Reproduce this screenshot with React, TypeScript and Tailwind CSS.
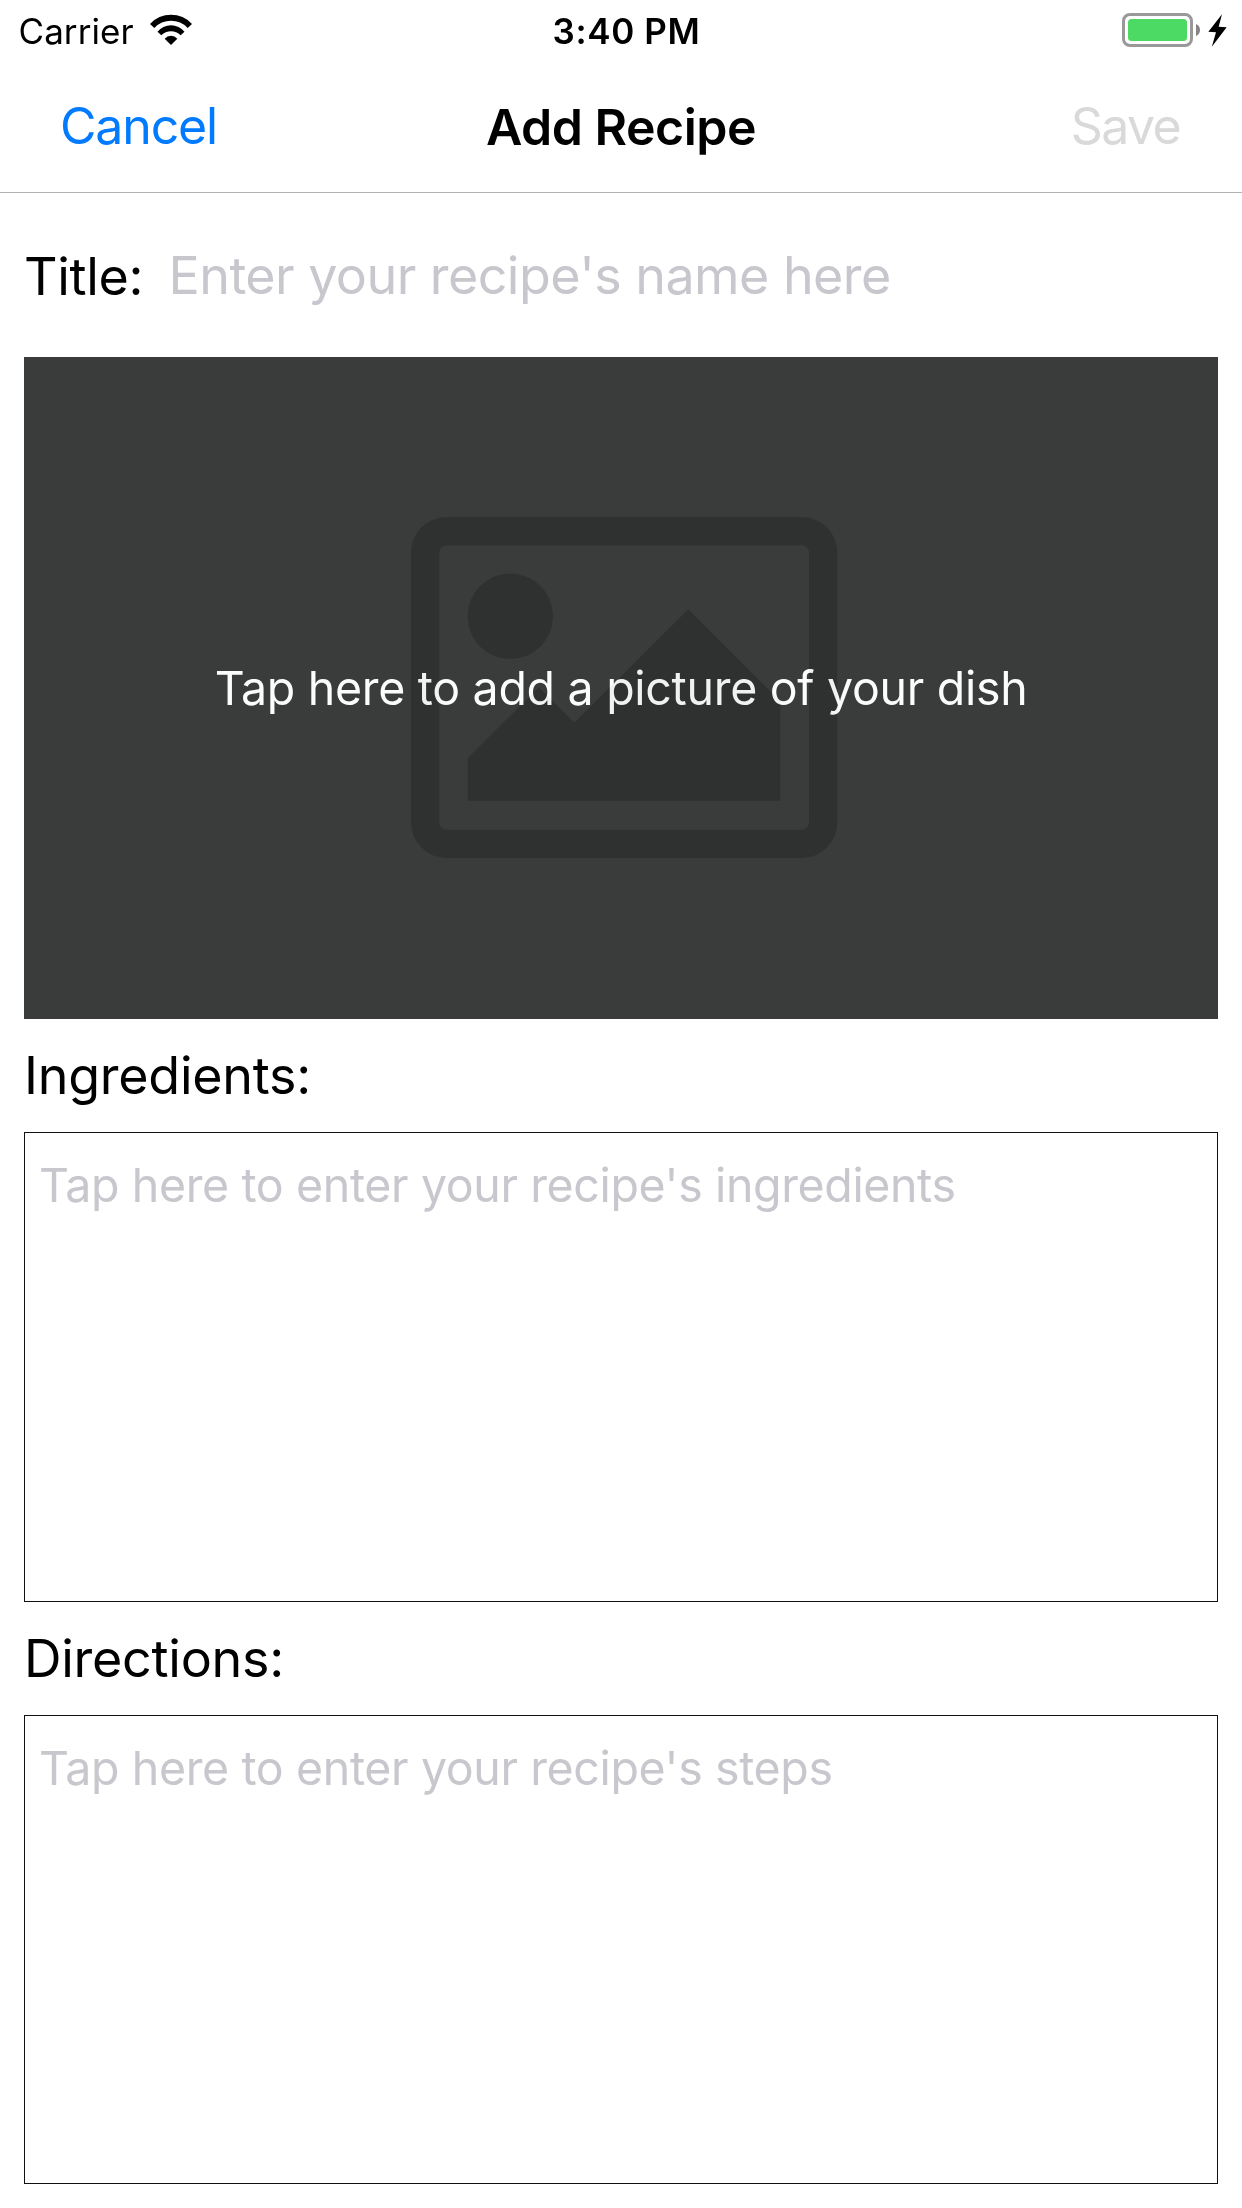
import React from "react";

function WifiIcon() {
  return (
    <svg className="block h-[32px] w-[42px]" viewBox="450 42 126 96" fill="black">
      <path d="M450 72A85 85 0 0 1 576 72L563 84A68 68 0 0 0 463 84Z" />
      <path d="M472.500 95A52 52 0 0 1 553.500 95L542 106A41 41 0 0 0 484 106Z" />
      <path d="M494 116A25 25 0 0 1 532 116L513 135Z" />
    </svg>
  );
}

function Battery() {
  return (
    <div className="flex items-center">
      <div className="h-[34px] w-[71px] rounded-[8px] border-3 border-[#999999] p-[3px]">
        <div className="h-full w-full rounded-[3.5px] bg-[#4cd964]" />
      </div>
      <svg className="ml-[3px] block h-[14px] w-[4px]" viewBox="0 0 4 14" fill="#858585">
        <path d="M0 1C2.500 2 4 4.200 4 7S2.500 12 0 13Z" />
      </svg>
      <svg className="ml-[8px] block h-[33px] w-[19px]" viewBox="746 42 57 99" fill="black">
        <path d="M788 43L747 95L770 97L757.500 140L802 82L778 80Z" />
      </svg>
    </div>
  );
}

function PictureIcon() {
  return (
    <svg
      className="col-start-1 row-start-1 block h-full w-full"
      viewBox="24 357 1194 662"
      fill="#2f3130"
    >
      <path
        fillRule="evenodd"
        d="M446.500 517H802A35.500 35.500 0 0 1 837.300 552.500V822.500A35.500 35.500 0 0 1 802 858H446.500A35.500 35.500 0 0 1 411 822.500V552.500A35.500 35.500 0 0 1 446.500 517ZM446.500 545.300A7.200 7.200 0 0 0 439.300 552.500V822.500A7.200 7.200 0 0 0 446.500 829.700H802A7.200 7.200 0 0 0 809 822.500V552.500A7.200 7.200 0 0 0 802 545.300Z"
      />
      <circle cx="510.300" cy="616.300" r="42.700" />
      <path d="M467.700 758.300L538.800 687.200L574.300 722.700L688.300 609.300L780.300 701.300V800.800H467.700Z" />
    </svg>
  );
}

function FieldLabel({ children }: { children: string }) {
  return (
    <div className="flex h-[113px] items-center text-[52px] leading-[63px] tracking-[-0.26px]">
      {children}
    </div>
  );
}

function TextBox({ placeholder, className }: { placeholder: string; className: string }) {
  return (
    <div
      className={`border border-[#111111] pt-6 pl-[14px] text-[46.5px] leading-[56px] tracking-[-0.37px] text-[#c7c7cd] ${className}`}
    >
      {placeholder}
    </div>
  );
}

export default function App() {
  return (
    <main className="h-[2208px] w-[1242px] overflow-hidden bg-white font-[Inter,sans-serif] whitespace-nowrap text-black">
      <div className="grid h-[60px] grid-cols-3 text-[35px] leading-[40px]">
        <div className="flex items-start pt-[11px] pl-[18.5px]">
          <span className="w-[131.5px] tracking-[0.07px]">Carrier</span>
          <div className="pt-[3px]">
            <WifiIcon />
          </div>
        </div>
        <div className="pt-[11px] pl-[11px] text-center font-semibold tracking-[0.63px]">3:40 PM</div>
        <div className="flex items-start justify-end pt-[13px] pr-[15px]">
          <Battery />
        </div>
      </div>

      <header className="grid h-[133px] grid-cols-3 border-b border-[#b2b2b2] px-[60px] text-[50px] leading-[60px]">
        <div className="pt-9 tracking-[-1.15px] text-[#007aff]">Cancel</div>
        <h1 className="pt-[37px] text-center font-semibold tracking-[-0.5px]">Add Recipe</h1>
        <div className="pt-9 pr-[2px] text-right tracking-[-1.6px] text-[#d9d9d9]">Save</div>
      </header>

      <div className="px-6">
        <div className="flex h-[164px] text-[52px] leading-[63px]">
          <span className="w-[144.5px] pt-[52px] tracking-[-0.32px]">Title:</span>
          <span className="pt-[51px] tracking-[-0.55px] text-[#c7c7cd]">
            Enter your recipe's name here
          </span>
        </div>

        <div className="grid h-[662px] grid-cols-1 grid-rows-1 place-items-center bg-[#3a3c3b]">
          <PictureIcon />
          <span className="col-start-1 row-start-1 text-[46.5px] leading-[56px] tracking-[-0.295px] text-[#c1c0c0] mix-blend-plus-lighter">
            Tap here to add a picture of your dish
          </span>
        </div>

        <FieldLabel>Ingredients:</FieldLabel>
        <TextBox className="h-[470px]" placeholder="Tap here to enter your recipe's ingredients" />
        <FieldLabel>Directions:</FieldLabel>
        <TextBox className="h-[469px]" placeholder="Tap here to enter your recipe's steps" />
      </div>
    </main>
  );
}
